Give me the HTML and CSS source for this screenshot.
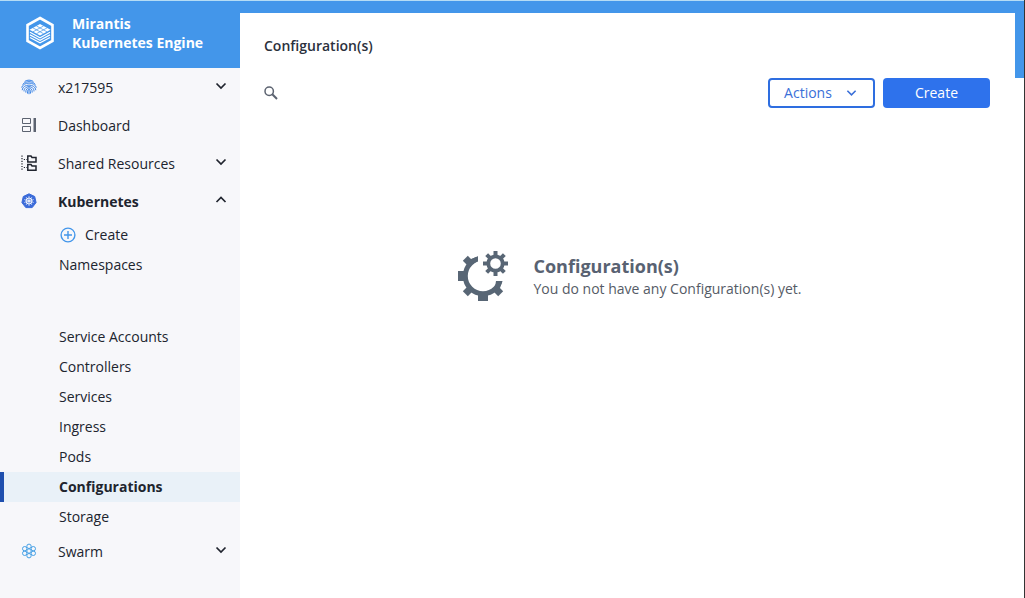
FILE: index.html
```html
<!DOCTYPE html>
<html lang="en">
<head>
<meta charset="utf-8">
<title>Configurations - Mirantis Kubernetes Engine</title>
<link rel="stylesheet" href="styles.css">
</head>
<body>
<div class="app">
  <aside class="sidebar">
    <a class="brand" href="#">
      <svg class="brand-logo" viewBox="0 0 30 34" aria-hidden="true">
        <path d="M15 2 27.500 9V25L15 32 2.500 25V9Z" fill="none" stroke="#fff" stroke-width="2.600"/>
        <path d="M15 8 25.500 13.800 15 19.600 4.500 13.800Z" fill="#fff"/>
        <path d="M11.500 10 22 15.800M8 11.900 18.500 17.700M18.500 10 8 15.800M22 11.900 11.500 17.700" stroke="#4396ea" stroke-width=".7"/>
        <path d="M5 16.300 15 21.700 25 16.300M5 18.900 15 24.300 25 18.900M5 21.500 15 26.900 25 21.500" fill="none" stroke="#fff" stroke-width="1.200"/>
      </svg>
      <span>Mirantis<br>Kubernetes Engine</span>
    </a>
    <nav class="nav">
      <button class="nav-row" type="button">
        <svg class="nav-icon" viewBox="0 0 16 16" fill="none" stroke="#3a84e6" stroke-linecap="round" aria-hidden="true">
          <path d="M4 2.200C6.400.7 9.600.7 12 2.200M1.800 5.200C4.500 1.700 11.500 1.700 14.200 5.200M.7 8.200C2.500 2.600 13.500 2.600 15.300 8.200M1.200 10.800C1.500 4.400 14.500 4.400 14.800 10.800M3 12C2.800 6 13.200 6 13 12M4.800 13.200C4.300 7.300 11.700 7.300 11.200 13.200M6.500 14.200C6 8.700 10 8.700 9.500 14.200M8 11V14.800"/>
        </svg>
        <span class="nav-label">x217595</span>
        <svg class="chevron" viewBox="0 0 12 8" aria-hidden="true"><path d="M1.500 1.500 6 6 10.500 1.500"/></svg>
      </button>
      <a class="nav-row" href="#">
        <svg class="nav-icon" viewBox="0 0 16 16" aria-hidden="true">
          <path d="M1.500 1.500H9.500V6.500H1.500ZM1.500 9.500H9.500V14.500H1.500Z" fill="none" stroke="#5c6370"/>
          <path d="M12.500 1H15V15H12.500Z" fill="#5c6370"/>
        </svg>
        <span class="nav-label">Dashboard</span>
      </a>
      <button class="nav-row" type="button">
        <svg class="nav-icon" viewBox="0 0 16 16" aria-hidden="true">
          <path d="M6.800 1H10L11 2.500H15V7H6.800ZM6.800 9.500H10L11 11H15V15.300H6.800Z" fill="none" stroke="#20242e" stroke-width="1.500"/>
          <path d="M1 .5V15M2.800 4.500H6M2.800 12.500H6" fill="none" stroke="#20242e" stroke-width="1.200" stroke-dasharray="1.200 1.400"/>
        </svg>
        <span class="nav-label">Shared Resources</span>
        <svg class="chevron" viewBox="0 0 12 8" aria-hidden="true"><path d="M1.500 1.500 6 6 10.500 1.500"/></svg>
      </button>
      <button class="nav-row nav-open" type="button" aria-expanded="true">
        <svg class="nav-icon" viewBox="0 0 16 16" aria-hidden="true">
          <path d="M8 .8 13.700 3.500 15.100 9.600 11.200 14.600H4.800L.9 9.600 2.300 3.500Z" fill="#3b6bd9" stroke="#3b6bd9" stroke-linejoin="round"/>
          <g fill="none" stroke="#fff">
            <circle cx="8" cy="8" r="3" stroke-width=".9"/>
            <path d="M8 3V13M3.200 6.500 12.800 9.500M3.200 9.500 12.800 6.500M5 4 11 12M11 4 5 12" stroke-width=".6"/>
          </g>
        </svg>
        <span class="nav-label">Kubernetes</span>
        <svg class="chevron" viewBox="0 0 12 8" aria-hidden="true"><path d="M1.500 6 6 1.500 10.500 6"/></svg>
      </button>
      <ul class="subnav">
        <li><a class="sub-row" href="#">
          <svg class="plus-icon" viewBox="0 0 16 16" fill="none" stroke="#4396ea" stroke-width="1.400" aria-hidden="true">
            <circle cx="8" cy="8" r="6.900"/><path d="M8 4V12M4 8H12"/>
          </svg>Create</a></li>
        <li><a class="sub-row" href="#">Namespaces</a></li>
      </ul>
      <ul class="subnav subnav-scoped">
        <li><a class="sub-row" href="#">Service Accounts</a></li>
        <li><a class="sub-row" href="#">Controllers</a></li>
        <li><a class="sub-row" href="#">Services</a></li>
        <li><a class="sub-row" href="#">Ingress</a></li>
        <li><a class="sub-row" href="#">Pods</a></li>
        <li><a class="sub-row sub-active" href="#" aria-current="page">Configurations</a></li>
        <li><a class="sub-row" href="#">Storage</a></li>
      </ul>
      <button class="nav-row" type="button">
        <svg class="nav-icon" viewBox="0 0 16 16" fill="none" stroke="#45a0e6" aria-hidden="true">
          <circle cx="8" cy="8" r="2.200"/><circle cx="8" cy="3.300" r="2.200"/><circle cx="8" cy="12.700" r="2.200"/><circle cx="3.700" cy="5.700" r="2.200"/><circle cx="12.300" cy="5.700" r="2.200"/><circle cx="3.700" cy="10.300" r="2.200"/><circle cx="12.300" cy="10.300" r="2.200"/>
        </svg>
        <span class="nav-label">Swarm</span>
        <svg class="chevron" viewBox="0 0 12 8" aria-hidden="true"><path d="M1.500 1.500 6 6 10.500 1.500"/></svg>
      </button>
    </nav>
  </aside>
  <main class="content">
    <h1 class="page-title">Configuration(s)</h1>
    <div class="toolbar">
      <button class="search" type="button" aria-label="Search">
        <svg viewBox="0 0 14 14" fill="none" stroke="#5c6370" aria-hidden="true"><circle cx="5.200" cy="5.200" r="4.200" stroke-width="1.500"/><path d="M8.300 8.300 13 13" stroke-width="2"/></svg>
      </button>
      <button class="btn btn-outline" type="button">Actions
        <svg class="chevron chevron-small" viewBox="0 0 12 8" aria-hidden="true"><path d="M1.500 1.500 6 6 10.500 1.500"/></svg>
      </button>
      <button class="btn btn-primary" type="button">Create</button>
    </div>
    <section class="empty">
      <svg class="empty-icon" viewBox="0 0 50 50" aria-hidden="true">
        <defs>
          <clipPath id="gear-cut"><path d="M0 0H20V30H50V50H0Z"/></clipPath>
          <path id="tooth" d="M0 20H7V30H0Z"/>
          <path id="small-tooth" d="M0 21.500H7V28.500H0Z"/>
          <path id="cog" d="M35.500 0H39.500V5H35.500Z"/>
        </defs>
        <g fill="#586675">
          <circle cx="25" cy="25" r="17.700" fill="none" stroke="#586675" stroke-width="5" clip-path="url(#gear-cut)"/>
          <use href="#tooth"/>
          <use href="#small-tooth" transform="rotate(45 25 25)"/>
          <use href="#small-tooth" transform="rotate(-45 25 25)"/>
          <use href="#tooth" transform="rotate(-90 25 25)"/>
          <use href="#small-tooth" transform="rotate(-135 25 25)"/>
          <path d="M13 8 20 5.500V10L14 13Z"/><path d="M38 30H44L42 37 37 36Z"/>
          <circle cx="37.500" cy="12.500" r="7.200" fill="none" stroke="#586675" stroke-width="3.800"/>
          <use href="#cog"/>
          <use href="#cog" transform="rotate(45 37.500 12.500)"/>
          <use href="#cog" transform="rotate(90 37.500 12.500)"/>
          <use href="#cog" transform="rotate(135 37.500 12.500)"/>
          <use href="#cog" transform="rotate(180 37.500 12.500)"/>
          <use href="#cog" transform="rotate(225 37.500 12.500)"/>
          <use href="#cog" transform="rotate(270 37.500 12.500)"/>
          <use href="#cog" transform="rotate(315 37.500 12.500)"/>
        </g>
      </svg>
      <div>
        <h2 class="empty-title">Configuration(s)</h2>
        <p class="empty-text">You do not have any Configuration(s) yet.</p>
      </div>
    </section>
  </main>
</div>
</body>
</html>
```
FILE: styles.css
```css
* { box-sizing: border-box; }

body {
  margin: 0;
  font-family: "Open Sans", "Noto Sans", sans-serif;
  font-size: 14px;
  line-height: 20px;
  color: #20242e;
}

a { color: inherit; text-decoration: none; }

button {
  font: inherit;
  color: inherit;
  background: none;
  border: 0;
  padding: 0;
  cursor: pointer;
}

.app {
  display: grid;
  grid-template-columns: 240px 1fr;
  min-height: 100vh;
  padding-right: 9px;
  border-right: 1px solid #333;
  background: linear-gradient(#b5dcf5 1px, #4396ea 1px 78px, #fff 78px);
}

.sidebar {
  background: #f7f7fa;
  border-top: 1px solid #b5dcf5;
}

.brand {
  display: flex;
  align-items: center;
  gap: 17px;
  height: 67px;
  padding: 0 25px 4px;
  background: #4396ea;
  color: #fff;
  font-weight: 700;
  line-height: 19px;
}

.brand-logo { width: 30px; height: 34px; }

.nav-row {
  display: flex;
  align-items: center;
  width: 100%;
  height: 38px;
  padding: 0 13px 0 21px;
  text-align: left;
}

.nav-icon { width: 16px; height: 16px; margin-right: 21px; }
.nav-label { flex: 1; padding-top: 2px; }
.nav-open { font-weight: 700; }

.chevron {
  width: 12px;
  height: 8px;
  fill: none;
  stroke: currentColor;
  stroke-width: 1.7;
}

.nav-row .chevron { margin-bottom: 2px; }

.subnav {
  list-style: none;
  margin: 0;
  padding: 0;
}

.subnav-scoped { margin-top: 42px; }

.sub-row {
  display: flex;
  align-items: center;
  height: 30px;
  padding-left: 55px;
  border-left: 4px solid transparent;
}

.sub-active {
  background: #e9f1f8;
  border-left-color: #1f4fae;
  font-weight: 700;
}

.plus-icon { width: 16px; height: 16px; margin: 0 9px 0 1px; }

.content {
  margin-top: 13px;
  padding: 23px 25px 24px 24px;
  background: #fff;
}

.page-title {
  margin: 0;
  font-size: 14px;
  font-weight: 600;
  color: #2b313d;
}

.toolbar {
  display: flex;
  align-items: center;
  gap: 8px;
  margin-top: 22px;
}

.search {
  display: flex;
  margin-right: auto;
}

.search svg { width: 14px; height: 14px; }

.btn {
  display: flex;
  align-items: center;
  justify-content: center;
  gap: 14px;
  width: 107px;
  height: 30px;
  border-radius: 4px;
}

.btn-outline {
  padding-right: 2px;
  border: 2px solid #2e6ee0;
  color: #3a6fd8;
}

.btn-primary {
  background: #2e72ec;
  color: #fff;
}

.chevron-small { width: 11px; }

.empty {
  display: flex;
  align-items: center;
  justify-content: center;
  gap: 25px;
  margin-top: 143px;
  padding-left: 6px;
}

.empty-icon { width: 50px; height: 50px; }

.empty-title {
  margin: 0;
  font-size: 18px;
  line-height: 26px;
  font-weight: 700;
  color: #586272;
}

.empty-text { margin: 0; color: #555b66; }
```
